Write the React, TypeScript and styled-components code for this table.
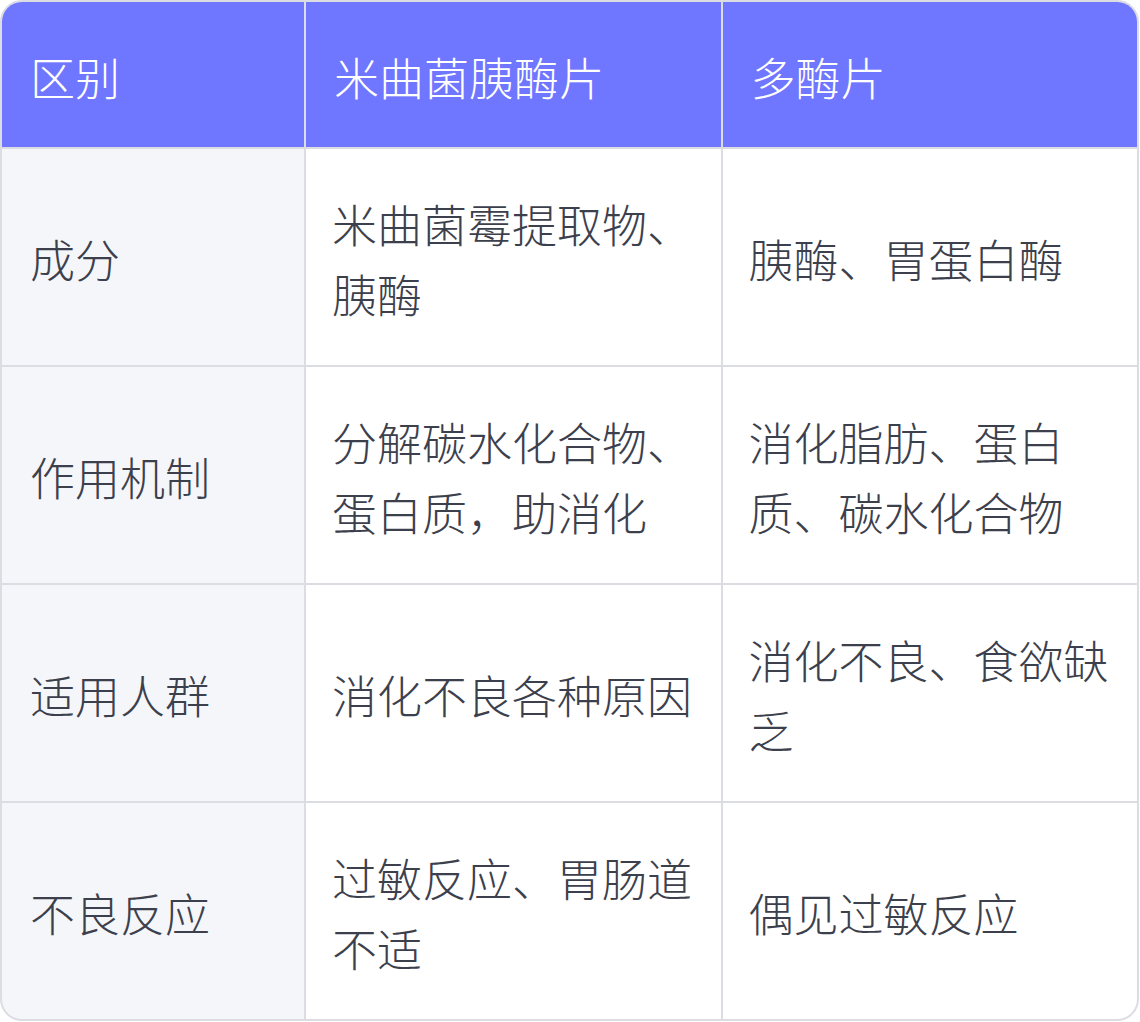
import React from 'react';
import styled, { createGlobalStyle } from 'styled-components';

const GlobalStyle = createGlobalStyle`
  html, body {
    margin: 0;
    padding: 0;
    background: #ffffff;
  }
  body {
    font-family: "Noto Sans CJK SC", "Noto Sans", sans-serif;
  }
`;

const header = ['区别', '米曲菌胰酶片', '多酶片'];

const rows = [
  ['成分', '米曲菌霉提取物、胰酶', '胰酶、胃蛋白酶'],
  ['作用机制', '分解碳水化合物、蛋白质，助消化', '消化脂肪、蛋白质、碳水化合物'],
  ['适用人群', '消化不良各种原因', '消化不良、食欲缺乏'],
  ['不良反应', '过敏反应、胃肠道不适', '偶见过敏反应'],
];

export default function App() {
  return (
    <>
      <GlobalStyle />
      <TableFrame>
        <Grid>
          {header.map((h) => (
            <HeadCell key={h}>{h}</HeadCell>
          ))}
          {rows.map((row) =>
            row.map((text, i) => (
              <Cell key={row[0] + i} $label={i === 0}>
                {text}
              </Cell>
            ))
          )}
        </Grid>
      </TableFrame>
    </>
  );
}

const TableFrame = styled.div`
  width: 1139px;
  box-sizing: border-box;
  border: 2px solid #dcdde3;
  border-radius: 22px;
  overflow: hidden;
  background: #dcdde3;
`;

const Grid = styled.div`
  display: grid;
  grid-template-columns: 302px 1fr 1fr;
  gap: 2px;
`;

const HeadCell = styled.div`
  display: flex;
  align-items: center;
  box-sizing: border-box;
  padding: 40px 24px 35px 28px;
  background: #6f76ff;
  color: #ffffff;
  font-size: 45px;
  font-weight: 300;
  line-height: 70px;
`;

const Cell = styled.div<{ $label?: boolean }>`
  display: flex;
  align-items: center;
  box-sizing: border-box;
  min-height: 216px;
  padding: 40px 24px 36px ${(p) => (p.$label ? '28px' : '26px')};
  background: ${(p) => (p.$label ? '#f5f6fa' : '#ffffff')};
  color: #3c404c;
  font-size: 45px;
  font-weight: 300;
  line-height: 70px;
`;
